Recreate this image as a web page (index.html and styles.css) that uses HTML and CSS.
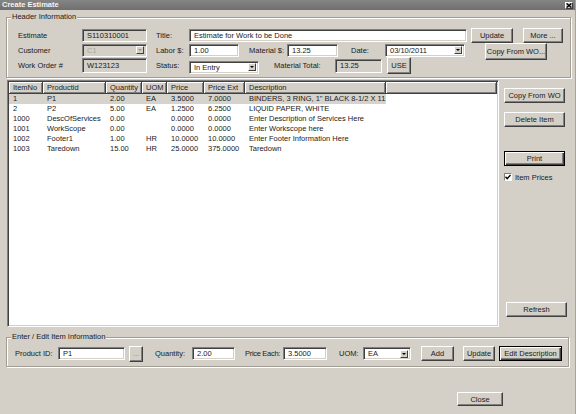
FILE: index.html
```html
<!DOCTYPE html>
<html lang="en">

<head>
    <meta charset="UTF-8">
    <title>Create Estimate</title>
    <link rel="stylesheet" href="styles.css">
</head>

<body>
    <div class="window">
        <div class="titlebar">
            <span>Create Estimate</span>
            <span class="title-close">
                <svg width="6" height="5" viewBox="0 0 6 5"><path d="M0.6 0.4L5.4 4.6M5.4 0.4L0.6 4.6" stroke="#000" stroke-width="1.3"/></svg>
            </span>
        </div>

        <!-- header group -->
        <div class="group header-group">
            <div class="group-title">Header Information</div>
            <div class="hrow r1">
                <span class="lbl w64">Estimate</span>
                <span class="field ro w65">S110310001</span>
                <span class="lbl w33 ml9">Title:</span>
                <span class="field w278">Estimate for Work to be Done</span>
                <button class="btn w42 ml4">Update</button>
                <button class="btn w40 ml10">More ...</button>
            </div>
            <div class="hrow r2">
                <span class="lbl w64">Customer</span>
                <span class="field combo disabled w65">C1<i class="drop"></i></span>
                <span class="lbl w33 ml9">Labor $:</span>
                <span class="field w50">1.00</span>
                <span class="lbl w38 ml10">Material $:</span>
                <span class="field w51">13.25</span>
                <span class="lbl w34 ml13">Date:</span>
                <span class="field combo w80">03/10/2011<i class="drop"></i></span>
                <button class="btn tall w62 ml20 copy-wo">Copy From WO...</button>
            </div>
            <div class="hrow r3">
                <span class="lbl w64">Work Order #</span>
                <span class="field ro w65 h15">W123123</span>
                <span class="lbl w33 ml9">Status:</span>
                <span class="field combo w70 status">In Entry<i class="drop"></i></span>
                <span class="lbl w61 ml15">Material Total:</span>
                <span class="field ro w47 h14">13.25</span>
                <button class="btn tall w24 ml5">USE</button>
            </div>
        </div>

        <!-- items list -->
        <div class="middle">
            <div class="list">
                <div class="lv-row lv-head">
                    <span>ItemNo</span><span>Productid</span><span>Quantity</span><span>UOM</span><span>Price</span><span>Price Ext</span><span>Description</span><span></span>
                </div>
                <div class="lv-row selected">
                    <span>1</span><span>P1</span><span>2.00</span><span>EA</span><span>3.5000</span><span>7.0000</span><span>BINDERS, 3 RING, 1" BLACK 8-1/2 X 11</span><span></span>
                </div>
                <div class="lv-row">
                    <span>2</span><span>P2</span><span>5.00</span><span>EA</span><span>1.2500</span><span>6.2500</span><span>LIQUID PAPER, WHITE</span><span></span>
                </div>
                <div class="lv-row">
                    <span>1000</span><span>DescOfServices</span><span>0.00</span><span></span><span>0.0000</span><span>0.0000</span><span>Enter Description of Services Here</span><span></span>
                </div>
                <div class="lv-row">
                    <span>1001</span><span>WorkScope</span><span>0.00</span><span></span><span>0.0000</span><span>0.0000</span><span>Enter Workscope here</span><span></span>
                </div>
                <div class="lv-row">
                    <span>1002</span><span>Footer1</span><span>1.00</span><span>HR</span><span>10.0000</span><span>10.0000</span><span>Enter Footer Information Here</span><span></span>
                </div>
                <div class="lv-row">
                    <span>1003</span><span>Taredown</span><span>15.00</span><span>HR</span><span>25.0000</span><span>375.0000</span><span>Taredown</span><span></span>
                </div>
            </div>

            <div class="side">
                <button class="btn side-btn copy">Copy From WO</button>
                <button class="btn side-btn delete">Delete Item</button>
                <button class="btn default side-btn print">Print</button>
                <label class="chk">
                    <span class="chk-box"><svg width="6" height="6" viewBox="0 0 6 6"><path d="M0.5 2.8L2.2 4.6L5.5 1" fill="none" stroke="#000" stroke-width="1.4"/></svg></span>
                    Item Prices
                </label>
                <button class="btn side-btn refresh">Refresh</button>
            </div>
        </div>

        <!-- item entry group -->
        <div class="group entry-group">
            <div class="group-title">Enter / Edit Item Information</div>
            <div class="erow">
                <span class="lbl w43">Product ID:</span>
                <span class="field w67">P1</span>
                <button class="btn dots w14 ml4">...</button>
                <span class="lbl w37 ml12">Quantity:</span>
                <span class="field w43">2.00</span>
                <span class="lbl w38 ml10 tight">Price Each:</span>
                <span class="field w44">3.5000</span>
                <span class="lbl w24 ml12">UOM:</span>
                <span class="field combo w48">EA<i class="drop"></i></span>
                <button class="btn w33 ml10">Add</button>
                <button class="btn w32 ml9">Update</button>
                <button class="btn default w63 ml4">Edit Description</button>
            </div>
        </div>

        <div class="footer">
            <button class="btn close-btn">Close</button>
        </div>
    </div>
</body>

</html>
```

FILE: styles.css
```css
html,
body {
    margin: 0;
    height: 100%;
    background: #d4d0c8;
    overflow: hidden;
}

body {
    font-family: "Liberation Sans", Arial, sans-serif;
    font-size: 7.5px;
    color: #1a1a1a;
}

.window {
    width: 576px;
    height: 414px;
    box-sizing: border-box;
    display: flex;
    flex-direction: column;
    background: #d4d0c8;
    border-right: 1px solid #a8a49c;
}

/* title bar */
.titlebar {
    flex: none;
    height: 10px;
    display: flex;
    align-items: center;
    justify-content: space-between;
    padding: 0 2px 0 2px;
    background: linear-gradient(#858585, #6f6f6f);
    color: #f4f4f4;
    font-weight: bold;
    line-height: 10px;
}

.title-close {
    width: 8px;
    height: 7px;
    box-sizing: border-box;
    background: #d4d0c8;
    border: 1px solid;
    border-color: #fff #404040 #404040 #fff;
    display: flex;
    align-items: center;
    justify-content: center;
}

/* group boxes */
.group {
    flex: none;
    border: 1px solid #a19d95;
    box-shadow: inset 1px 1px 0 #fff, 1px 1px 0 #fff;
}

.group-title {
    display: table;
    margin: -6px 0 0 4px;
    padding: 0 1px;
    line-height: 10px;
    background: #d4d0c8;
}

.header-group {
    margin: 7px 4px 0 6px;
    padding-bottom: 3px;
}

.hrow {
    display: flex;
    align-items: center;
    padding-left: 11px;
}

.hrow.r1 {
    height: 16px;
    margin-top: 5px;
}

.hrow.r2 {
    height: 14px;
}

.hrow.r3 {
    height: 17px;
}

.copy-wo {
    align-self: flex-start;
    margin-top: 1px;
}

.status {
    margin-top: 3px;
}

.entry-group {
    margin: 10px 6px 0 6px;
    padding-bottom: 4px;
}

.erow {
    display: flex;
    align-items: center;
    height: 17px;
    margin-top: 3px;
    padding-left: 8px;
}

/* labels and fields */
.lbl {
    flex: none;
    white-space: nowrap;
}

.lbl.tight {
    letter-spacing: -0.3px;
}

.field {
    flex: none;
    box-sizing: border-box;
    height: 13px;
    display: flex;
    align-items: center;
    padding: 0 1px 0 4px;
    background: #fff;
    border: 1px solid;
    border-color: #808080 #fff #fff #808080;
    box-shadow: inset 1px 1px 0 #404040, inset -1px -1px 0 #d4d0c8;
    white-space: nowrap;
    overflow: hidden;
}

.field.ro {
    background: #d4d0c8;
}

.field.h14 {
    height: 14px;
}

.field.h15 {
    height: 15px;
}

.combo {
    justify-content: space-between;
    padding-right: 2px;
}

.combo.disabled {
    background: #d4d0c8;
    color: #a8a59f;
}

.drop {
    flex: none;
    width: 8px;
    height: 8px;
    box-sizing: border-box;
    background: #d4d0c8;
    border: 1px solid;
    border-color: #fff #404040 #404040 #fff;
    display: flex;
    align-items: center;
    justify-content: center;
}

.drop::after {
    content: "";
    border-left: 2px solid transparent;
    border-right: 2px solid transparent;
    border-top: 2px solid #000;
}

.combo.disabled .drop::after {
    border-top-color: #9a978f;
}

/* buttons */
.btn {
    flex: none;
    box-sizing: border-box;
    height: 15px;
    margin-top: 0;
    margin-bottom: 0;
    padding: 0;
    display: flex;
    align-items: center;
    justify-content: center;
    font: inherit;
    color: #1a1a1a;
    background: #d4d0c8;
    border: 1px solid;
    border-color: #fff #404040 #404040 #fff;
    box-shadow: inset -1px -1px 0 #808080;
    white-space: nowrap;
}

.btn.tall {
    height: 17px;
}

.btn.default {
    border: 1px solid #000;
    box-shadow: inset 1px 1px 0 #fff, inset -1px -1px 0 #404040, inset -2px -2px 0 #808080;
}

.btn.dots {
    height: 16px;
    color: #8a8780;
}

.w14 { width: 14px; }
.w24 { width: 24px; }
.w32 { width: 32px; }
.w33 { width: 33px; }
.w34 { width: 34px; }
.w37 { width: 37px; }
.w38 { width: 38px; }
.w40 { width: 40px; }
.w42 { width: 42px; }
.w43 { width: 43px; }
.w44 { width: 44px; }
.w47 { width: 47px; }
.w48 { width: 48px; }
.w50 { width: 50px; }
.w51 { width: 51px; }
.w61 { width: 61px; }
.w62 { width: 62px; }
.w63 { width: 63px; }
.w64 { width: 64px; }
.w65 { width: 65px; }
.w67 { width: 67px; }
.w70 { width: 70px; }
.w80 { width: 80px; }
.w278 { width: 278px; }

.ml4 { margin-left: 4px; }
.ml5 { margin-left: 5px; }
.ml9 { margin-left: 9px; }
.ml10 { margin-left: 10px; }
.ml12 { margin-left: 12px; }
.ml13 { margin-left: 13px; }
.ml15 { margin-left: 15px; }
.ml20 { margin-left: 20px; }

/* list view */
.middle {
    flex: none;
    display: flex;
    height: 247px;
    margin-top: 2px;
    padding-left: 7px;
}

.list {
    flex: none;
    width: 492px;
    height: 247px;
    box-sizing: border-box;
    padding: 1px;
    background: #fff;
    border: 1px solid;
    border-color: #808080 #fff #fff #808080;
    box-shadow: inset 1px 1px 0 #404040, inset -1px -1px 0 #d4d0c8;
}

.lv-row {
    display: grid;
    grid-template-columns: 34px 63px 36px 25px 37px 41px 141px 1fr;
    height: 10px;
    line-height: 10px;
    color: #222;
}

.lv-row span {
    padding-left: 4px;
    white-space: nowrap;
    overflow: hidden;
}

.lv-row.selected span:not(:last-child) {
    background: #d6d3cd;
}

.lv-head {
    height: 12px;
    line-height: 11px;
}

.lv-head span {
    box-sizing: border-box;
    height: 12px;
    background: #d4d0c8;
    border-right: 1px solid #404040;
    border-bottom: 1px solid #404040;
    box-shadow: inset 1px 1px 0 #fff, inset -1px -1px 0 #808080;
}

/* side buttons */
.side {
    flex: none;
    width: 61px;
    margin-left: 5px;
    display: flex;
    flex-direction: column;
}

.side-btn {
    width: 61px;
}

.copy {
    margin-top: 8px;
}

.delete {
    margin-top: 9px;
}

.print {
    margin-top: 24px;
}

.chk {
    display: flex;
    align-items: center;
    height: 10px;
    margin-top: 6px;
    white-space: nowrap;
}

.chk-box {
    width: 8px;
    height: 8px;
    box-sizing: border-box;
    margin-right: 3px;
    background: #fff;
    border: 1px solid;
    border-color: #808080 #fff #fff #808080;
    display: flex;
    align-items: center;
    justify-content: center;
}

.refresh {
    margin-top: auto;
    margin-bottom: 10px;
    margin-left: 2px;
}

/* footer */
.footer {
    flex: none;
    display: flex;
    margin-top: 25px;
    padding-left: 457px;
}

.close-btn {
    width: 46px;
    height: 14px;
}
```
